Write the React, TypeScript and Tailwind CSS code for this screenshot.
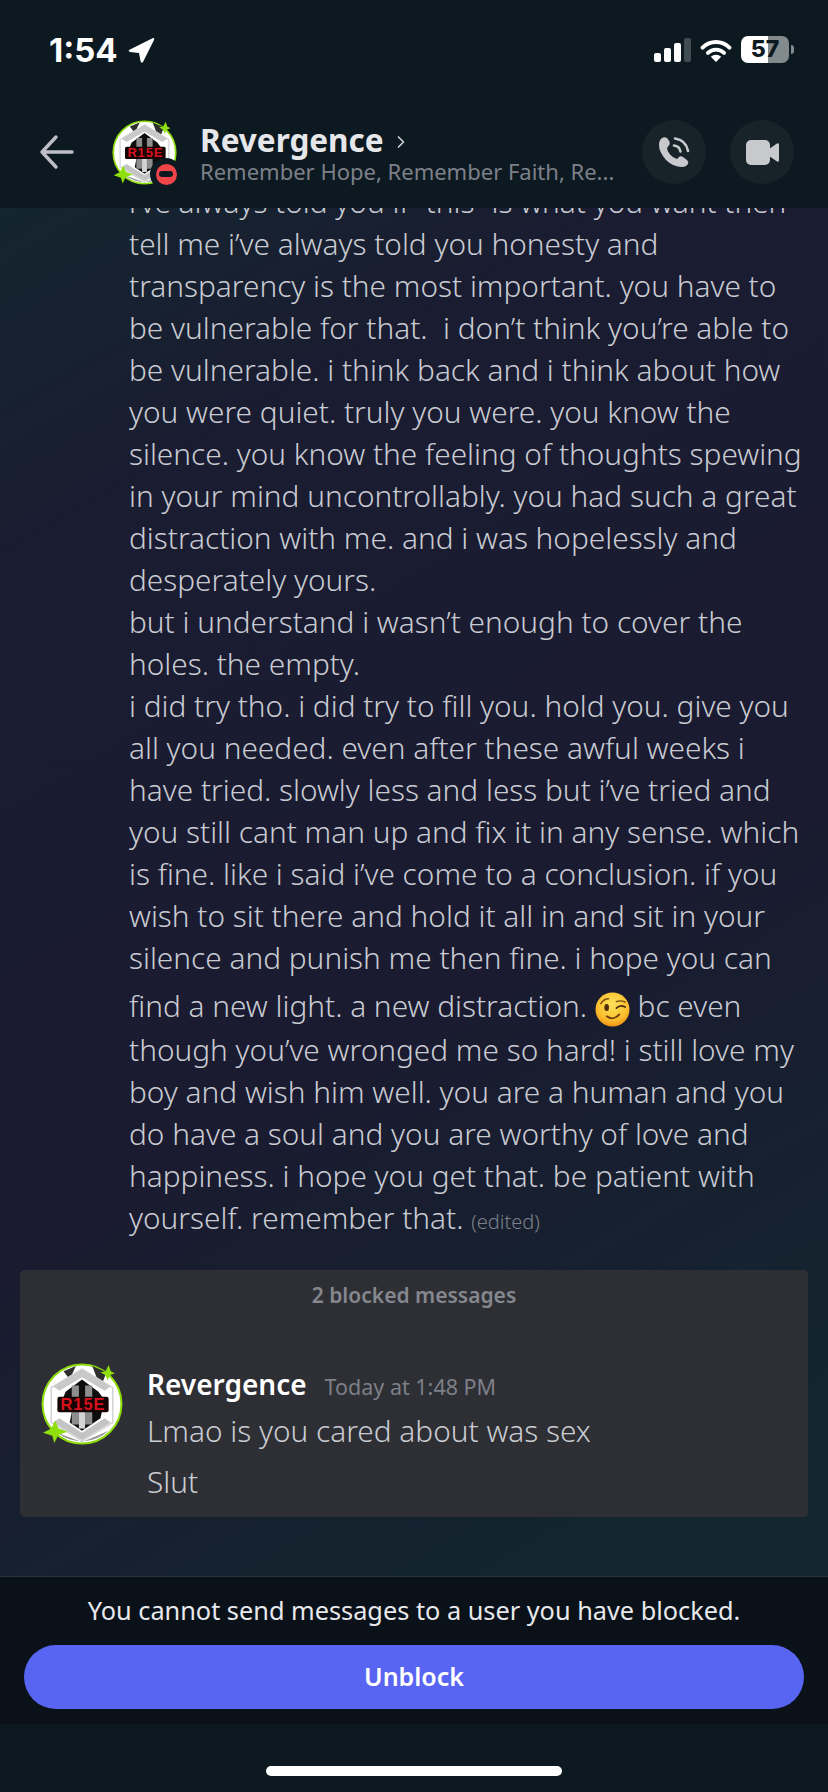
import { ChevronRight } from 'lucide-react';

const FONT = 'font-["Noto_Sans","Open_Sans",sans-serif]';

const LINES = [
  'tell me i’ve always told you honesty and',
  'transparency is the most important. you have to',
  'be vulnerable for that.  i don’t think you’re able to',
  'be vulnerable. i think back and i think about how',
  'you were quiet. truly you were. you know the',
  'silence. you know the feeling of thoughts spewing',
  'in your mind uncontrollably. you had such a great',
  'distraction with me. and i was hopelessly and',
  'desperately yours.',
  'but i understand i wasn’t enough to cover the',
  'holes. the empty.',
  'i did try tho. i did try to fill you. hold you. give you',
  'all you needed. even after these awful weeks i',
  'have tried. slowly less and less but i’ve tried and',
  'you still cant man up and fix it in any sense. which',
  'is fine. like i said i’ve come to a conclusion. if you',
  'wish to sit there and hold it all in and sit in your',
  'silence and punish me then fine. i hope you can',
];

const LINES_AFTER = [
  'though you’ve wronged me so hard! i still love my',
  'boy and wish him well. you are a human and you',
  'do have a soul and you are worthy of love and',
  'happiness. i hope you get that. be patient with',
];

function Avatar({ size }: { size: number }) {
  return (
    <svg width={size} height={size} viewBox="0 0 80 80" className="shrink-0">
      <circle cx="40" cy="40" r="38.5" fill="#fff" stroke="#8fdc0c" strokeWidth="2" />
      <path d="M16 68 A38 38 0 0 0 66 66 L40 77 Z" fill="#9c9c9c" />
      <path d="M22 8 L34 3 L28 16 Z M50 3 L64 9 L58 24 Z" fill="#2e2e2e" />
      <path d="M40 6 L70 24 L70 58 L40 76 L10 58 L10 24 Z" fill="#fff" stroke="#d4d4d4" strokeWidth="1.5" />
      <path d="M40 6 L68 23 L62 27 L40 14 L18 27 L12 23 Z" fill="#c9c9c9" />
      <path d="M12 58 L18 54 L40 68 L62 54 L68 58 L40 75 Z" fill="#c4c4c4" />
      <path d="M24 28 L40 16 L56 28 L62 36 L58 54 L40 66 L28 58 L30 48 L20 38 Z" fill="#0d0d0d" />
      <path d="M30 22 H37 V60 H30 Z M43 22 H50 V60 H43 Z" fill="#8d8d8d" />
      <path d="M37 46 H43 V64 H37 Z" fill="#d4d4d4" />
      <rect x="16" y="33" width="50" height="15" rx="2" fill="#160404" />
      <text x="41" y="46" textAnchor="middle" fontFamily="Liberation Sans" fontWeight="700" fontSize="16" letterSpacing="1" fill="#d8101c">R15E</text>
      <path d="M2 68 L10 64 L14 56 L17 64 L26 67 L17 70 L13 78 L11 71 Z" fill="#8fe00c" />
      <path d="M58 9 L63 8 L66 2 L68 8 L72 10 L67 12 L65 17 L63 12 Z" fill="#8fe00c" />
    </svg>
  );
}

function WinkEmoji() {
  return (
    <span className="relative inline-block h-[20px] w-[35px] align-[-3px]">
      <svg width="35" height="35" viewBox="0 0 36 36" className="absolute left-0 top-[-8px]">
        <defs>
          <radialGradient id="wink" cx="50%" cy="35%" r="70%">
            <stop offset="0%" stopColor="#fde35a" />
            <stop offset="65%" stopColor="#fbbf2e" />
            <stop offset="100%" stopColor="#ee8a12" />
          </radialGradient>
        </defs>
        <circle cx="18" cy="18" r="17.5" fill="url(#wink)" />
        <path d="M6 12 Q9 7 14 7" fill="none" stroke="#7c4a12" strokeWidth="1.5" strokeLinecap="round" />
        <path d="M22 10 Q26 8 31 10.500" fill="none" stroke="#7c4a12" strokeWidth="1.5" strokeLinecap="round" />
        <ellipse cx="12" cy="16" rx="2.4" ry="3.6" fill="#4d2c0c" />
        <path d="M22 16.500 Q26 12.500 31 15.500" fill="none" stroke="#4d2c0c" strokeWidth="1.800" strokeLinecap="round" />
        <path d="M12 25 Q19 30 25 23" fill="none" stroke="#6d3a0e" strokeWidth="1.800" strokeLinecap="round" />
      </svg>
    </span>
  );
}

export default function App() {
  return (
    <div className={`${FONT} relative flex h-[1792px] w-[828px] flex-col overflow-hidden bg-[#0d1920]`}>
      {/* Status bar + header */}
      <div className="z-10 h-[208px] shrink-0 bg-[#0d1920]">
        <div className="flex h-[88px] items-start justify-between pl-[49px] pr-[34px] pt-[33px]">
          <div className="flex items-center gap-[10px]">
            <span className='font-["Inter",sans-serif] text-[33px] font-bold leading-[34px] text-white'>1:54</span>
            <svg width="27" height="27" viewBox="0 0 27 27">
              <path d="M1 13 L25 1 Q27 0.5 26 3 L15 25 Q13.5 27 12.5 24 L11 16 L2 15 Q0 14 1 13 Z" fill="#fff" />
            </svg>
          </div>
          <div className="flex items-center gap-[9px] pt-[3px]">
            <svg width="37" height="24" viewBox="0 0 37 24">
              <rect x="0" y="15" width="7" height="9" rx="2" fill="#fff" />
              <rect x="10" y="10" width="7" height="14" rx="2" fill="#fff" />
              <rect x="20" y="5" width="7" height="19" rx="2" fill="#fff" />
              <rect x="30" y="0" width="7" height="24" rx="2" fill="#3f4d52" />
            </svg>
            <svg width="32" height="24" viewBox="0 0 32 24" fill="none">
              <path d="M2.600 9.600 A19 19 0 0 1 29.400 9.600" stroke="#fff" strokeWidth="4" strokeLinecap="round" />
              <path d="M7.900 14.900 A11.500 11.500 0 0 1 24.100 14.900" stroke="#fff" strokeWidth="3.800" strokeLinecap="round" />
              <path d="M16 24 L10.800 18.800 A7.400 7.400 0 0 1 21.200 18.800 Z" fill="#fff" />
            </svg>
            <div className="flex items-center gap-[2px]">
              <div className="flex h-[27px] w-[48px] items-center justify-center rounded-[7px] bg-[linear-gradient(90deg,#fff_56%,#828a8c_56%)] font-['Inter',sans-serif] text-[23px] font-extrabold leading-none text-[#0d1920]">
                57
              </div>
              <div className="h-[9px] w-[3px] rounded-r-full bg-[#828a8c]" />
            </div>
          </div>
        </div>
        <div className="flex h-[120px] items-start pr-[34px] pt-[32px]">
          <svg width="36" height="36" viewBox="0 0 36 36" fill="none" className="ml-[39px] mt-[14px] shrink-0">
            <path d="M33 18 H3 M17 3 L3 18 L17 33" stroke="#bfc0c6" strokeWidth="3.400" strokeLinecap="round" strokeLinejoin="round" />
          </svg>
          <div className="relative ml-[37px] shrink-0">
            <Avatar size={65} />
            <div className="absolute bottom-[-5px] right-[-5px] flex h-[32px] w-[32px] items-center justify-center rounded-full bg-[#0d1920]">
              <div className="flex h-[21px] w-[21px] items-center justify-center rounded-full bg-[#ee4549]">
                <div className="h-[6px] w-[14px] rounded-full bg-[#0d1920]" />
              </div>
            </div>
          </div>
          <div className="ml-[23px] min-w-0 flex-1 pt-[3px]">
            <div className="flex items-center gap-[7px]">
              <span className="text-[31.5px] font-bold leading-[34px] text-[#e6e7ea]">Revergence</span>
              <ChevronRight className="mt-[3px] text-[#d0d1d5]" size={20} strokeWidth={2} />
            </div>
            <div className="whitespace-nowrap text-[22px] leading-[28px] text-[#7d8089]">
              Remember Hope, Remember Faith, Re...
            </div>
          </div>
          <div className="flex items-center gap-[24px]">
            <button className="flex h-[64px] w-[64px] items-center justify-center rounded-full bg-[#172229]">
              <svg width="32" height="32" viewBox="0 0 32 32" fill="none">
                <path d="M4 2 Q1 4 1 9 Q1 16 8 24 Q15 31 24 31 Q28 31 30 28 Q31 26 29 24 L25 21 Q22.500 19.500 20.500 21.500 L19 23 Q15 22 12 18.500 Q9 15 9 12 L10.500 10 Q12.500 8 11.500 5.500 L9 2 Q6.500 0.500 4 2 Z" fill="#c8c9cd" />
                <path d="M16 9.500 Q21.500 10 22.500 15.500" stroke="#c8c9cd" strokeWidth="2.600" strokeLinecap="round" />
                <path d="M17 2.500 Q28 4 30 15" stroke="#c8c9cd" strokeWidth="2.600" strokeLinecap="round" />
              </svg>
            </button>
            <button className="flex h-[64px] w-[64px] items-center justify-center rounded-full bg-[#172229]">
              <svg width="33" height="25" viewBox="0 0 33 25">
                <rect x="0" y="0" width="24" height="25" rx="5" fill="#c8c9cd" />
                <path d="M23 9 L31 3.500 Q33 2.500 33 5 V20 Q33 22.500 31 21.500 L23 16 Z" fill="#c8c9cd" />
              </svg>
            </button>
          </div>
        </div>
      </div>

      {/* Messages */}
      <div className="flex min-h-0 flex-1 flex-col justify-end overflow-hidden bg-[linear-gradient(150deg,#14252f_0%,#1a1c31_20%,#1a1b30_58%,#13252f_90%)]">
        <div className="shrink-0 pl-[129px] text-[29.8px] font-light leading-[42px] text-[#c9cbd2]">
          <div className="whitespace-pre">i’ve always told you if ”this” is what you want then</div>
          {LINES.map((line) => (
            <div key={line} className="whitespace-pre">{line}</div>
          ))}
          <div className="whitespace-pre pb-[2px] pt-[6px]">
            find a new light. a new distraction. <WinkEmoji /> bc even
          </div>
          {LINES_AFTER.map((line) => (
            <div key={line} className="whitespace-pre">{line}</div>
          ))}
          <div className="whitespace-pre">
            yourself. remember that. <span className="text-[20px] text-[#7d8089]">(edited)</span>
          </div>
        </div>

        <div className="mx-[20px] mb-[59px] mt-[27px] h-[247px] shrink-0 rounded-[5px] bg-[#2e2f34]">
          <div className="pt-[11px] text-center text-[21px] font-semibold leading-[28px] text-[#85878e]">2 blocked messages</div>
          <div className="mt-[54px] flex gap-[24px] pl-[21px]">
            <Avatar size={82} />
            <div className="pt-[3px]">
              <div className="flex items-baseline gap-[18px]">
                <span className="text-[28px] font-semibold leading-[36px] text-white">Revergence</span>
                <span className="text-[21.5px] leading-[36px] text-[#7d8089]">Today at 1:48 PM</span>
              </div>
              <div className="mt-[5px] text-[29.8px] font-light leading-[42px] text-[#c9cbd2]">Lmao is you cared about was sex</div>
              <div className="mt-[9px] text-[29.8px] font-light leading-[42px] text-[#c9cbd2]">Slut</div>
            </div>
          </div>
        </div>
      </div>

      {/* Blocked footer */}
      <div className="shrink-0 border-t border-[#2a333b] bg-[#0a1119]">
        <div className="h-[147px] px-[24px] pt-[15px]">
          <div className="text-center text-[25.3px] leading-[36px] text-[#e8e9ec]">You cannot send messages to a user you have blocked.</div>
          <button className="mt-[17px] h-[64px] w-[780px] rounded-full bg-[#5865f2] text-[25px] font-semibold text-white">Unblock</button>
        </div>
      </div>

      {/* Home indicator */}
      <div className="flex h-[68px] shrink-0 justify-center bg-[#0d1920] pt-[42px]">
        <div className="h-[10px] w-[296px] rounded-full bg-white" />
      </div>
    </div>
  );
}
